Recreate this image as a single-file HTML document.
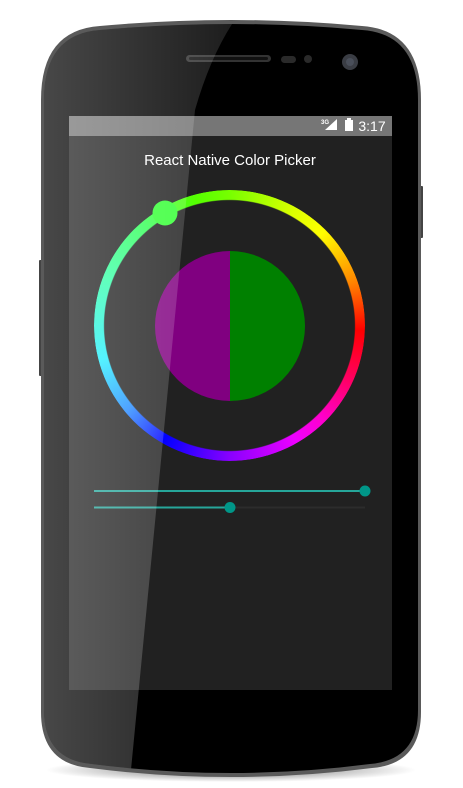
<!DOCTYPE html>
<html><head><style>
html,body{margin:0;padding:0;background:#fff;width:463px;height:788px;overflow:hidden;font-family:"Liberation Sans",sans-serif}
</style></head><body>
<svg width="463" height="788" viewBox="0 0 463 788" xmlns="http://www.w3.org/2000/svg" style="position:absolute;left:0;top:0">
<defs>
<radialGradient id="sh" cx="0.5" cy="0.5" r="0.5"><stop offset="0" stop-color="#000" stop-opacity="0.6"/><stop offset="1" stop-color="#000" stop-opacity="0"/></radialGradient>
<linearGradient id="gl" x1="0" y1="0" x2="1" y2="0"><stop offset="0" stop-color="#fff" stop-opacity="0.32"/><stop offset="1" stop-color="#fff" stop-opacity="0.1"/></linearGradient>
<clipPath id="ph"><path d="M100,30 Q231,18 362,30 Q418,34 418,100 L418,710 Q418,760 370,764 Q231,782 92,764 Q44,760 44,710 L44,100 Q44,34 100,30 Z"/></clipPath>
</defs>
<ellipse cx="231" cy="770" rx="185" ry="12" fill="url(#sh)"/>
<rect x="419" y="186" width="4" height="52" rx="1" fill="#444"/>
<rect x="39" y="260" width="4" height="116" rx="1" fill="#444"/>
<path d="M100,26 Q231,14 362,26 Q421,30 421,100 L421,712 Q421,764 372,768 Q231,786 90,768 Q41,764 41,712 L41,100 Q41,30 100,26 Z" fill="#5a5a5a"/>
<path d="M100,30 Q231,18 362,30 Q418,34 418,100 L418,710 Q418,760 370,764 Q231,782 92,764 Q44,760 44,710 L44,100 Q44,34 100,30 Z" fill="#000"/>
<rect x="186" y="55" width="85" height="7" rx="3.5" fill="#333"/>
<rect x="189" y="57" width="79" height="3" rx="1.5" fill="#111"/>
<rect x="281" y="56" width="15" height="7" rx="3.5" fill="#2a2a2a"/>
<circle cx="308" cy="59" r="4" fill="#2a2a2a"/>
<circle cx="350" cy="62" r="8" fill="#3a3d44"/>
<circle cx="350" cy="62" r="4" fill="#4a4f5a"/>
<rect x="69" y="116" width="323" height="574" fill="#212121"/>
<rect x="69" y="116" width="323" height="20" fill="#767676"/>
<text x="230" y="165" fill="#fff" font-size="15" text-anchor="middle" font-family="Liberation Sans, sans-serif">React Native Color Picker</text>
<text x="372" y="131" fill="#fff" font-size="14" text-anchor="middle" font-family="Liberation Sans, sans-serif">3:17</text>
<path d="M325,130 L337,119 L337,130 Z" fill="#fff"/>
<text x="321" y="124" fill="#fff" font-size="6" font-weight="bold">3G</text>
<rect x="345" y="120" width="8" height="11" fill="#fff"/>
<rect x="347" y="118" width="4" height="2" fill="#fff"/>
<foreignObject x="94" y="190" width="272" height="272">
<div xmlns="http://www.w3.org/1999/xhtml" style="width:271px;height:271px;border-radius:50%;background:conic-gradient(#7f0 0deg,#df0 30deg,#ff0 45deg,#f80 70deg,#f00 92deg,#f06 115deg,#f0c 135deg,#e0f 150deg,#80f 180deg,#00f 210deg,#28f 230deg,#2ef 255deg,#3fa 290deg,#3f5 320deg,#5f0 345deg,#7f0 360deg);-webkit-mask:radial-gradient(circle,transparent 125px,#000 126px);mask:radial-gradient(circle,transparent 125px,#000 126px)"></div>
</foreignObject>
<path d="M230,251 A75,75 0 0,0 230,401 Z" fill="#800080"/>
<path d="M230,251 A75,75 0 0,1 230,401 Z" fill="#008000"/>
<circle cx="165" cy="213" r="12.5" fill="#33ff33"/>
<line x1="94" y1="491" x2="365" y2="491" stroke="#26a69a" stroke-width="2"/>
<circle cx="365" cy="491" r="5.5" fill="#009688"/>
<line x1="230" y1="507.5" x2="365" y2="507.5" stroke="#2c2c2c" stroke-width="2"/>
<line x1="94" y1="507.5" x2="230" y2="507.5" stroke="#26a69a" stroke-width="2"/>
<circle cx="230" cy="507.5" r="5.5" fill="#009688"/>
<g clip-path="url(#ph)">
<path d="M0,0 L250,0 Q215,40 195,110 L130,780 L0,780 Z" fill="url(#gl)"/>
</g>
</svg>
</body></html>
